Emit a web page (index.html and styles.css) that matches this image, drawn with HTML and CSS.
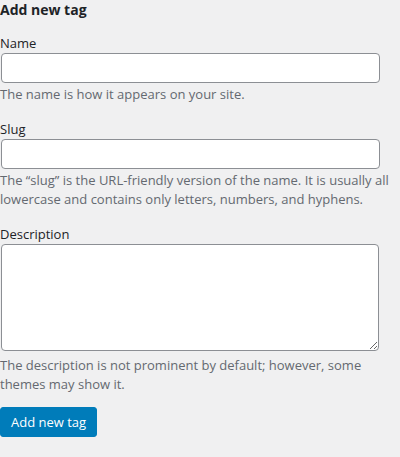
FILE: index.html
```html
<!DOCTYPE html>
<html>
<head>
<meta charset="utf-8">
<link rel="stylesheet" href="styles.css">
</head>
<body>
<div class="form-wrap">
  <h2 class="title">Add new tag</h2>
  <form class="form">
    <div class="field">
      <label class="label" for="tag-name">Name</label>
      <input class="input" id="tag-name" type="text">
      <p class="help">The name is how it appears on your site.</p>
    </div>
    <div class="field">
      <label class="label" for="tag-slug">Slug</label>
      <input class="input" id="tag-slug" type="text">
      <p class="help">The “slug” is the URL-friendly version of the name. It is usually all lowercase and contains only letters, numbers, and hyphens.</p>
    </div>
    <div class="field field-last">
      <label class="label" for="tag-description">Description</label>
      <textarea class="textarea" id="tag-description"></textarea>
      <p class="help help-area">The description is not prominent by default; however, some themes may show it.</p>
    </div>
    <button class="button" type="button">Add new tag</button>
  </form>
</div>
</body>
</html>
```

FILE: styles.css
```css
html, body {
  margin: 0;
  padding: 0;
  background: #f0f0f1;
}
body {
  font-family: "Open Sans", "Noto Sans", sans-serif;
  font-size: 13px;
  color: #3c434a;
}
.form-wrap {
  width: 400px;
}
.title {
  margin: 0;
  font-size: 14px;
  line-height: 20px;
  font-weight: 700;
  color: #1d2327;
}
.form {
  margin-top: 14px;
}
.field {
  margin-bottom: 16px;
}
.field-last {
  margin-bottom: 13px;
}
.label {
  display: block;
  line-height: 19px;
  color: #1d2327;
}
.input {
  display: block;
  box-sizing: border-box;
  margin: 0 0 0 1px;
  width: 379px;
  height: 30px;
  padding: 0 8px;
  border: 1px solid #8c8f94;
  border-radius: 4px;
  background: #fff;
  font: inherit;
}
.textarea {
  display: block;
  box-sizing: border-box;
  margin: 0 0 0 1px;
  width: 378px;
  height: 107px;
  padding: 2px 6px;
  border: 1px solid #8c8f94;
  border-radius: 4px;
  background: #fff;
  font: inherit;
  resize: both;
}
.help {
  margin: 2px 0 0;
  line-height: 19px;
  color: #646970;
}
.help-area {
  margin-top: 5px;
}
.button {
  display: block;
  box-sizing: border-box;
  height: 30px;
  padding: 0 10px;
  border: 1px solid #007cba;
  border-radius: 3px;
  background: #007cba;
  color: #fff;
  font: inherit;
  font-size: 13px;
  white-space: nowrap;
  cursor: pointer;
}
```
